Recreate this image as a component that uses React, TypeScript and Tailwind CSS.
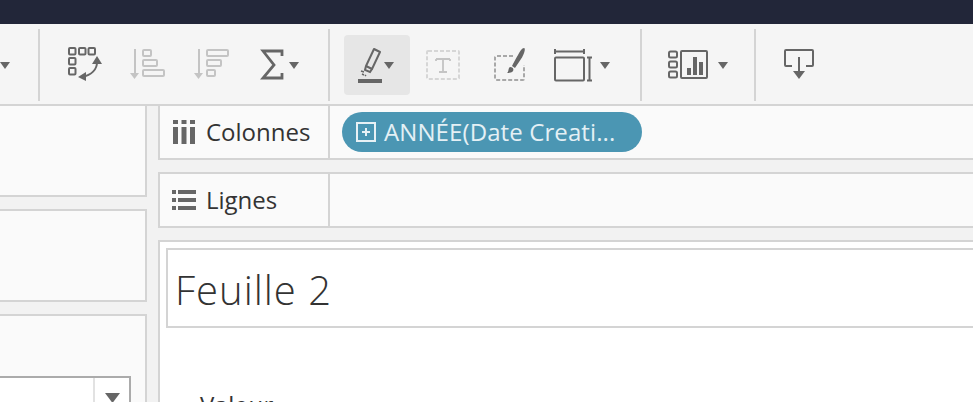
const sans = "font-['Open_Sans','Liberation_Sans',sans-serif]";

function Caret({ className = "fill-[#666]" }: { className?: string }) {
  return (
    <svg width="10" height="7" viewBox="0 0 10 7" className={className}>
      <path d="M0 0h10L5 7z" />
    </svg>
  );
}

function Sep() {
  return <div className="w-0.5 h-[72px] bg-[#d4d4d4] shrink-0" />;
}

function SwapIcon() {
  return (
    <svg width="36" height="36" viewBox="0 0 36 36" fill="none" stroke="#666" strokeWidth="2">
      <rect x="1" y="1" width="6.500" height="6.500" rx="1" />
      <rect x="11" y="1" width="6.500" height="6.500" rx="1" />
      <rect x="20.500" y="1" width="6.500" height="6.500" rx="1" />
      <rect x="1" y="11" width="6.500" height="6.500" rx="1" />
      <rect x="1" y="21" width="6.500" height="6.500" rx="1" />
      <path d="M29 15c0 7-5 13-15 15" strokeWidth="2" />
      <path d="M29 9l5 8h-10zM10 30l8-5v9z" fill="#666" stroke="none" />
    </svg>
  );
}

function SortAsc() {
  return (
    <svg width="36" height="34" viewBox="0 0 36 34" fill="none" stroke="#c4c4c4" strokeWidth="2">
      <path d="M5 1v26" />
      <path d="M0 25h9l-4.500 6z" fill="#c4c4c4" stroke="none" />
      <rect x="13" y="2" width="8" height="6" rx="1" />
      <rect x="13" y="12" width="14" height="6" rx="1" />
      <rect x="13" y="22" width="21" height="6" rx="1" />
    </svg>
  );
}

function SortDesc() {
  return (
    <svg width="36" height="34" viewBox="0 0 36 34" fill="none" stroke="#c4c4c4" strokeWidth="2">
      <path d="M5 1v26" />
      <path d="M0 25h9l-4.500 6z" fill="#c4c4c4" stroke="none" />
      <rect x="13" y="2" width="21" height="6" rx="1" />
      <rect x="13" y="12" width="14" height="6" rx="1" />
      <rect x="13" y="22" width="8" height="6" rx="1" />
    </svg>
  );
}

function Sigma() {
  return (
    <svg width="24" height="32" viewBox="0 0 24 32" fill="none" stroke="#666" strokeWidth="2.800">
      <path d="M22 7V2H3l11 14L3 29h19v-5" />
    </svg>
  );
}

function Marker() {
  return (
    <svg width="26" height="36" viewBox="0 0 26 36" fill="none" stroke="#666" strokeWidth="2">
      <path d="M16 2l6 3-8 17-6-3z" strokeLinejoin="round" />
      <path d="M8 19l-1 4 5 2 2-3" />
      <path d="M3 24l3 1M4 27l2 1M7 28l1 1" strokeWidth="1.500" />
      <rect x="0" y="32" width="24" height="4" fill="#666" stroke="none" />
    </svg>
  );
}

function TextBox() {
  return (
    <svg width="34" height="30" viewBox="0 0 34 30" fill="none">
      <rect x="1" y="1" width="32" height="28" rx="1" stroke="#d6d6d6" strokeWidth="2" strokeDasharray="4 2" />
      <path d="M10 9h14M17 9v13M13 22h8M10 9v2M24 9v2" stroke="#c4c4c4" strokeWidth="1.800" />
    </svg>
  );
}

function Brush() {
  return (
    <svg width="32" height="36" viewBox="0 0 32 36" fill="none">
      <path d="M19 9H2a1 1 0 0 0-1 1v22a1 1 0 0 0 1 1h27a1 1 0 0 0 1-1V18" stroke="#a8a8a8" strokeWidth="2" strokeDasharray="4 2" />
      <path d="M30 1c2 0 0 7-3 11-2 3-4 6-6 9l-3-2c2-4 4-8 6-11 2-4 4-7 6-7z" fill="#666" />
      <path d="M16 20c3 0 4 2 3 4-1 2-5 2-6 2 2-1 1-5 3-6z" fill="#666" />
    </svg>
  );
}

function FitIcon() {
  return (
    <svg width="38" height="34" viewBox="0 0 38 34" fill="none" stroke="#666" strokeWidth="2">
      <path d="M1 1v5M30 1v5M1 3.500h29" />
      <rect x="1" y="9.500" width="29" height="23" rx="1" />
      <path d="M33 9.500h5M33 32.500h5M35.500 9.500v23" />
    </svg>
  );
}

function ShowMe() {
  return (
    <svg width="40" height="30" viewBox="0 0 40 30" fill="none" stroke="#666" strokeWidth="2">
      <rect x="1" y="1.500" width="8" height="6" rx="1.500" />
      <rect x="1" y="11.500" width="8" height="6" rx="1.500" />
      <rect x="1" y="21.500" width="8" height="6" rx="1.500" />
      <rect x="13" y="1" width="26" height="27" rx="1" />
      <path d="M19 18h4v7h-4zM25 7h4v18h-4zM31 12h4v13h-4z" fill="#666" stroke="none" />
    </svg>
  );
}

function Presentation() {
  return (
    <svg width="30" height="32" viewBox="0 0 30 32" fill="none" stroke="#666" strokeWidth="2">
      <path d="M8 17H2a1 1 0 0 1-1-1V2a1 1 0 0 1 1-1h26a1 1 0 0 1 1 1v14a1 1 0 0 1-1 1h-6" />
      <path d="M15 8v16" />
      <path d="M9 22h12l-6 8z" fill="#666" stroke="none" />
    </svg>
  );
}

function PillField() {
  return (
    <div className="h-10 w-[300px] rounded-full bg-[#4b96b3] flex items-center pl-[14px] gap-2 overflow-hidden">
      <div className="w-5 h-5 border-2 border-[#e8f1f5] flex items-center justify-center shrink-0">
        <svg width="10" height="10" viewBox="0 0 10 10" stroke="#e8f1f5" strokeWidth="2">
          <path d="M5 1v8M1 5h8" />
        </svg>
      </div>
      <span className={`${sans} text-[24px] tracking-[0.1px] text-[#e4f0f5] whitespace-nowrap`}>ANNÉE(Date Creati...</span>
    </div>
  );
}

function Shelf({ icon, label, children, className }: { icon: React.ReactNode; label: string; children?: React.ReactNode; className: string }) {
  return (
    <div className={`${className} shrink-0 flex border-2 border-r-0 border-[#d4d4d4] bg-[#fafafa]`}>
      <div className="w-[170px] shrink-0 border-r-2 border-[#d4d4d4] flex items-center pl-[12px] gap-[10px]">
        <div className="w-6 flex justify-center">{icon}</div>
        <span className={`${sans} text-[24px] text-[#333]`}>{label}</span>
      </div>
      <div className="flex-1 flex items-center pl-[12px]">{children}</div>
    </div>
  );
}

export default function App() {
  return (
    <div className="w-[973px] h-[402px] overflow-hidden bg-[#f2f2f2] flex flex-col">
      <div className="h-6 bg-[#222639] shrink-0" />
      <div className="h-[82px] shrink-0 bg-[#f5f5f5] border-b-2 border-[#d4d4d4] flex items-start pt-[5px]">
        <div className="w-[38px] flex items-center h-[72px]">
          <Caret />
        </div>
        <Sep />
        <div className="w-[288px] h-[72px] flex items-center pl-[28px]">
          <SwapIcon />
          <div className="ml-[26px]"><SortAsc /></div>
          <div className="ml-[28px]"><SortDesc /></div>
          <div className="ml-[30px] flex items-center gap-[5px]"><Sigma /><Caret /></div>
        </div>
        <Sep />
        <div className="w-[310px] h-[72px] flex items-center pl-[14px]">
          <div className="w-[66px] h-[60px] rounded-sm bg-[#e6e6e6] flex items-center pl-[14px]">
            <Marker />
            <Caret />
          </div>
          <div className="ml-4"><TextBox /></div>
          <div className="ml-[34px]"><Brush /></div>
          <div className="ml-7 flex items-center gap-2"><FitIcon /><Caret /></div>
        </div>
        <Sep />
        <div className="w-[112px] h-[72px] flex items-center pl-[26px] gap-[10px]">
          <ShowMe />
          <Caret />
        </div>
        <Sep />
        <div className="h-[72px] flex items-center pl-[28px]">
          <Presentation />
        </div>
      </div>
      <div className="flex-1 flex min-h-0">
        <div className="w-[147px] shrink-0 flex flex-col gap-[12px]">
          <div className="h-[91px] shrink-0 border-2 border-l-0 border-t-0 border-[#d4d4d4] bg-[#fafafa]" />
          <div className="h-[93px] shrink-0 border-2 border-l-0 border-[#d4d4d4] bg-[#fafafa]" />
          <div className="flex-1 border-2 border-l-0 border-b-0 border-[#d4d4d4] bg-[#fafafa] pt-[60px] pr-[14px]">
            <div className="h-10 border-2 border-l-0 border-b-0 border-[#ababab] bg-white flex justify-end">
              <div className="w-9 border-l-2 border-[#e2e2e2] flex justify-center pt-[15px]">
                <svg width="15" height="10" viewBox="0 0 15 10" className="fill-[#666]">
                  <path d="M0 0h15L7.500 10z" />
                </svg>
              </div>
            </div>
          </div>
        </div>
        <div className="ml-[11px] flex-1 flex flex-col min-w-0 overflow-hidden">
          <Shelf className="h-[54px] border-t-0" icon={
            <svg width="22" height="24" viewBox="0 0 22 24" fill="#666">
              <path d="M0 0h5v4H0zM8.500 0h5v4h-5zM17 0h5v4h-5zM0 7h5v17H0zM8.500 7h5v17h-5zM17 7h5v17h-5z" />
            </svg>
          } label="Colonnes"><PillField /></Shelf>
          <div className="h-[12px] shrink-0" />
          <Shelf className="h-[56px]" icon={
            <svg width="24" height="20" viewBox="0 0 24 20" fill="#666">
              <path d="M0 0h4v4H0zM6 0h18v4H6zM0 8h4v4H0zM6 8h18v4H6zM0 16h4v4H0zM6 16h18v4H6z" />
            </svg>
          } label="Lignes" />
          <div className="h-[12px] shrink-0" />
          <div className="flex-1 min-h-0 overflow-hidden border-2 border-r-0 border-b-0 border-[#d4d4d4] bg-white pt-[6px] pl-[6px]">
            <div className="h-[80px] border-2 border-r-0 border-[#d4d4d4] flex items-center pl-[7px] pt-[4px]">
              <span className={`${sans} text-[40px] font-light tracking-[1px] text-[#333]`}>Feuille 2</span>
            </div>
            <div className={`${sans} text-[24px] tracking-[0.3px] text-[#333] pl-[34px] mt-[65px] leading-none`}>Valeur</div>
          </div>
        </div>
      </div>
    </div>
  );
}
